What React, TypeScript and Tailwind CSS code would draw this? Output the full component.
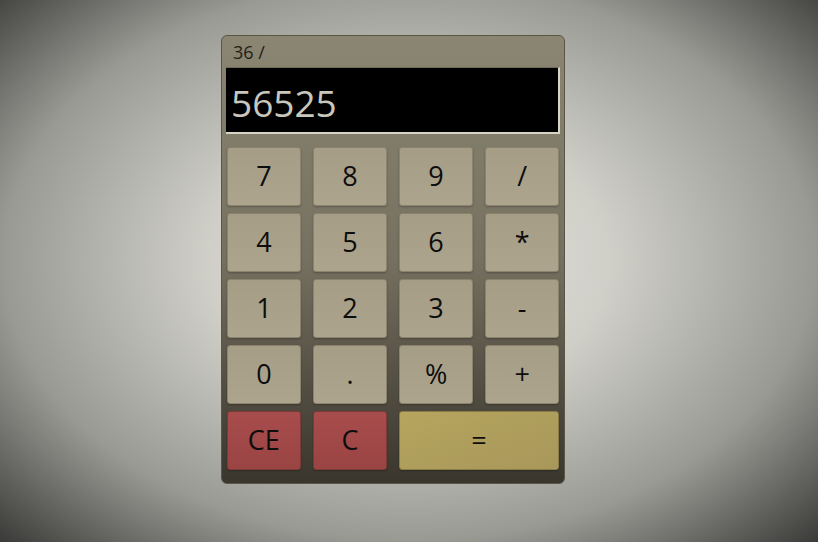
import React from "react";

const keys: { label: string; kind: "num" | "clear" | "eq"; wide?: boolean }[] = [
  { label: "7", kind: "num" },
  { label: "8", kind: "num" },
  { label: "9", kind: "num" },
  { label: "/", kind: "num" },
  { label: "4", kind: "num" },
  { label: "5", kind: "num" },
  { label: "6", kind: "num" },
  { label: "*", kind: "num" },
  { label: "1", kind: "num" },
  { label: "2", kind: "num" },
  { label: "3", kind: "num" },
  { label: "-", kind: "num" },
  { label: "0", kind: "num" },
  { label: ".", kind: "num" },
  { label: "%", kind: "num" },
  { label: "+", kind: "num" },
  { label: "CE", kind: "clear" },
  { label: "C", kind: "clear" },
  { label: "=", kind: "eq", wide: true },
];

function Key({ label, kind, wide }: { label: string; kind: string; wide?: boolean }) {
  const tone =
    kind === "clear"
      ? "bg-gradient-to-b from-[#a84c4c] to-[#9a4444] border-[#7e3a36]"
      : kind === "eq"
      ? "bg-gradient-to-br from-[#b5a55e] to-[#a8975a] border-[#8a7c48]"
      : "bg-gradient-to-b from-[#a59d86] to-[#aca48d] border-[#8b836d]";
  return (
    <button
      className={`${wide ? "col-span-2" : ""} ${tone} h-[59px] rounded-[3px] border text-[27px] font-normal text-[#0d0d0d] flex items-center justify-center shadow-[0_1px_2px_rgba(0,0,0,0.25)]`}
    >
      {label}
    </button>
  );
}

export default function App() {
  return (
    <div
      className="w-[818px] h-[542px] flex items-start pl-[221px] pt-[35px] bg-[radial-gradient(ellipse_farthest-corner_at_50%_48%,#e9e9e3_0%,#cfcfc8_35%,#9a9a95_70%,#3a3a38_100%)]"
      style={{ fontFamily: '"Open Sans", "Noto Sans", sans-serif' }}
    >
      <div className="w-[344px] h-[449px] rounded-[6px] border border-[#5b5547] bg-gradient-to-b from-[#8b8672] via-[#767060] to-[#3a362d] px-[4px] flex flex-col">
        <div className="h-[31px] flex items-center pl-[7px] text-[18px] font-normal text-[#1f1e1b] leading-none">
          36 /
        </div>
        <div className="h-[67px] bg-black border-t border-t-[#6f6a5c] border-r-2 border-b-2 border-r-[#d9d5c6] border-b-[#d9d5c6] flex items-center pl-[5px]">
          <span className="text-[37px] font-normal text-[#c9c7bd] leading-none mt-[4px]">56525</span>
        </div>
        <div className="grid grid-cols-4 gap-x-[12.4px] gap-y-[7px] px-[1px] mt-[13px]">
          {keys.map((k) => (
            <Key key={k.label} {...k} />
          ))}
        </div>
      </div>
    </div>
  );
}
